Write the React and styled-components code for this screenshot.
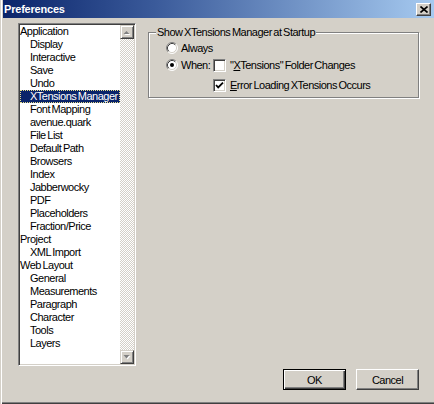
import React from 'react';
import styled, { createGlobalStyle } from 'styled-components';

const Global = createGlobalStyle`
  html, body { margin: 0; padding: 0; background: #d4d0c8; }
  body {
    font-family: "Liberation Sans", Arial, sans-serif;
    font-size: 11px;
    letter-spacing: -0.5px;
    word-spacing: -1px;
    color: #000;
  }
  #root { width: 434px; height: 404px; }
`;

const Window = styled.div`
  box-sizing: border-box;
  width: 434px;
  height: 404px;
  background: #d4d0c8;
  border-left: 1px solid #d4d0c8;
  padding: 0 0 2px 2px;
  box-shadow: inset 1px 0 0 #ffffff, inset 0 -1px 0 #404040, inset 0 -2px 0 #808080;
  display: flex;
  flex-direction: column;
  overflow: hidden;
`;

const TitleBar = styled.div`
  height: 18px;
  flex: none;
  display: flex;
  align-items: center;
  justify-content: space-between;
  padding: 0 3px 0 1px;
  background: linear-gradient(to right, #0a246a 0%, #3a5a9a 35%, #a6caf0 100%);
`;

const TitleText = styled.span`
  color: #fff;
  font-weight: bold;
  font-size: 11px;
  letter-spacing: -0.2px;
  word-spacing: 0;
`;

const CloseButton = styled.button`
  box-sizing: border-box;
  width: 15px;
  height: 13px;
  padding: 0;
  margin: 0;
  background: #d4d0c8;
  border-style: solid;
  border-width: 1px;
  border-color: #fff #404040 #404040 #fff;
  box-shadow: inset -1px -1px 0 #808080;
  display: flex;
  align-items: center;
  justify-content: center;
`;

const Body = styled.div`
  display: flex;
  align-items: flex-start;
  padding: 5px 0 0 15px;
  flex: none;
`;

const ListBox = styled.div`
  box-sizing: border-box;
  width: 118px;
  height: 343px;
  flex: none;
  background: #fff;
  border-style: solid;
  border-width: 1px;
  border-color: #808080 #fff #fff #808080;
  box-shadow: inset 1px 1px 0 #404040, inset -1px -1px 0 #d4d0c8;
  padding: 1px;
  display: flex;
`;

const Items = styled.div`
  flex: 1;
  min-width: 0;
  display: flex;
  flex-direction: column;
  padding-top: 0;
`;

const Item = styled.div`
  height: 13px;
  line-height: 13px;
  white-space: nowrap;
  padding-left: ${(p) => (p.$child ? '10px' : '0')};
  background: ${(p) => (p.$selected ? '#0a246a' : 'transparent')};
  color: ${(p) => (p.$selected ? '#fff' : '#000')};
  outline: ${(p) => (p.$selected ? '1px dotted #e6dc8c' : 'none')};
  outline-offset: -1px;
`;

const ScrollBar = styled.div`
  width: 14px;
  flex: none;
  display: flex;
  flex-direction: column;
`;

const ScrollTrack = styled.div`
  flex: 1;
  background: repeating-conic-gradient(#ffffff 0 25%, #d4d0c8 0 50%) 0 0 / 2px 2px;
`;

const ArrowButton = styled.div`
  box-sizing: border-box;
  width: 14px;
  height: 14px;
  background: #d4d0c8;
  border-style: solid;
  border-width: 1px;
  border-color: #d4d0c8 #404040 #404040 #d4d0c8;
  box-shadow: inset 1px 1px 0 #fff, inset -1px -1px 0 #808080;
  display: flex;
  align-items: center;
  justify-content: center;
`;

const GroupBox = styled.fieldset`
  box-sizing: border-box;
  margin: 3px 0 0 12px;
  width: 271px;
  min-width: 0;
  padding: 1px 0 1px 7px;
  border: 1px solid #808080;
  box-shadow: 1px 1px 0 #fff, inset 1px 1px 0 #fff;
`;

const Legend = styled.legend`
  padding: 0 1px;
  line-height: 13px;
  background: #d4d0c8;
`;

const OptionsGrid = styled.div`
  margin-left: 10px;
  display: grid;
  grid-template-columns: 47px auto;
  grid-template-rows: 16px 18px 22px;
`;

const Option = styled.label`
  display: flex;
  align-items: center;
  gap: ${(p) => (p.$check ? '4px' : '3px')};
  grid-column: ${(p) => p.$col || 'auto'};
  white-space: nowrap;
`;

const CheckBox = styled.span`
  box-sizing: border-box;
  width: 13px;
  height: 13px;
  flex: none;
  background: #fff;
  border-style: solid;
  border-width: 1px;
  border-color: #808080 #fff #fff #808080;
  box-shadow: inset 1px 1px 0 #404040, inset -1px -1px 0 #d4d0c8;
  display: flex;
  align-items: center;
  justify-content: center;
`;

const Key = styled.span`
  text-decoration: underline;
`;

const Footer = styled.div`
  display: flex;
  justify-content: flex-end;
  gap: 10px;
  padding: 3px 15px 0 0;
`;

const Button = styled.button`
  box-sizing: border-box;
  width: 63px;
  height: 21px;
  margin: 0;
  padding: 0;
  font: inherit;
  letter-spacing: inherit;
  color: #000;
  background: #d4d0c8;
  border-style: solid;
  border-width: 1px;
  border-color: ${(p) => (p.$default ? '#000' : '#fff #404040 #404040 #fff')};
  box-shadow: ${(p) =>
    p.$default
      ? 'inset 1px 1px 0 #fff, inset -1px -1px 0 #404040, inset -2px -2px 0 #808080'
      : 'inset -1px -1px 0 #808080'};
`;

const Radio = ({ checked }) => (
  <svg width="12" height="12" viewBox="0 0 12 12" style={{ flex: 'none' }}>
    <circle cx="6" cy="6" r="5" fill="#fff" />
    <path d="M2.11 9.89 A5.5 5.5 0 0 1 9.89 2.11" fill="none" stroke="#808080" />
    <path d="M9.89 2.11 A5.5 5.5 0 0 1 2.11 9.89" fill="none" stroke="#fff" />
    <path d="M2.82 9.18 A4.5 4.5 0 0 1 9.18 2.82" fill="none" stroke="#404040" />
    <path d="M9.18 2.82 A4.5 4.5 0 0 1 2.82 9.18" fill="none" stroke="#d4d0c8" />
    {checked && <circle cx="6" cy="6" r="2" fill="#000" />}
  </svg>
);

const Check = () => (
  <svg width="9" height="9" viewBox="0 0 9 9">
    <polyline points="1,4 3.2,6.4 8,1.6" fill="none" stroke="#000" strokeWidth="1.8" />
  </svg>
);

const Arrow = ({ up }) => (
  <svg width="8" height="5" viewBox="0 0 8 5">
    {up ? (
      <>
        <polygon points="1.5,5 4.5,2 7.5,5" fill="#fff" />
        <polygon points="0.5,4 3.5,1 6.5,4" fill="#808080" />
      </>
    ) : (
      <>
        <polygon points="1.5,1 7.5,1 4.5,4.5" fill="#fff" />
        <polygon points="0.5,0 6.5,0 3.5,3.5" fill="#808080" />
      </>
    )}
  </svg>
);

const items = [
  ['Application', false],
  ['Display', true],
  ['Interactive', true],
  ['Save', true],
  ['Undo', true],
  ['XTensions Manager', true],
  ['Font Mapping', true],
  ['avenue.quark', true],
  ['File List', true],
  ['Default Path', true],
  ['Browsers', true],
  ['Index', true],
  ['Jabberwocky', true],
  ['PDF', true],
  ['Placeholders', true],
  ['Fraction/Price', true],
  ['Project', false],
  ['XML Import', true],
  ['Web Layout', false],
  ['General', true],
  ['Measurements', true],
  ['Paragraph', true],
  ['Character', true],
  ['Tools', true],
  ['Layers', true],
];

export default function App() {
  return (
    <>
      <Global />
      <Window>
        <TitleBar>
          <TitleText>Preferences</TitleText>
          <CloseButton aria-label="Close">
            <svg width="8" height="7" viewBox="0 0 8 7">
              <path d="M0.5 0.5 L7.5 6.5 M7.5 0.5 L0.5 6.5" stroke="#000" strokeWidth="1.6" />
            </svg>
          </CloseButton>
        </TitleBar>
        <Body>
          <ListBox>
            <Items>
              {items.map(([label, child]) => (
                <Item key={label} $child={child} $selected={label === 'XTensions Manager'}>
                  {label}
                </Item>
              ))}
            </Items>
            <ScrollBar>
              <ArrowButton>
                <Arrow up />
              </ArrowButton>
              <ScrollTrack />
              <ArrowButton>
                <Arrow />
              </ArrowButton>
            </ScrollBar>
          </ListBox>
          <GroupBox>
            <Legend>Show XTensions Manager at Startup</Legend>
            <OptionsGrid>
              <Option $col="1 / 3">
                <Radio />
                <span>Always</span>
              </Option>
              <Option>
                <Radio checked />
                <span>When:</span>
              </Option>
              <Option $check>
                <CheckBox />
                <span>
                  "<Key>X</Key>Tensions" Folder Changes
                </span>
              </Option>
              <Option $check $col="2">
                <CheckBox>
                  <Check />
                </CheckBox>
                <span>
                  <Key>E</Key>rror Loading XTensions Occurs
                </span>
              </Option>
            </OptionsGrid>
          </GroupBox>
        </Body>
        <Footer>
          <Button $default>OK</Button>
          <Button>Cancel</Button>
        </Footer>
      </Window>
    </>
  );
}
